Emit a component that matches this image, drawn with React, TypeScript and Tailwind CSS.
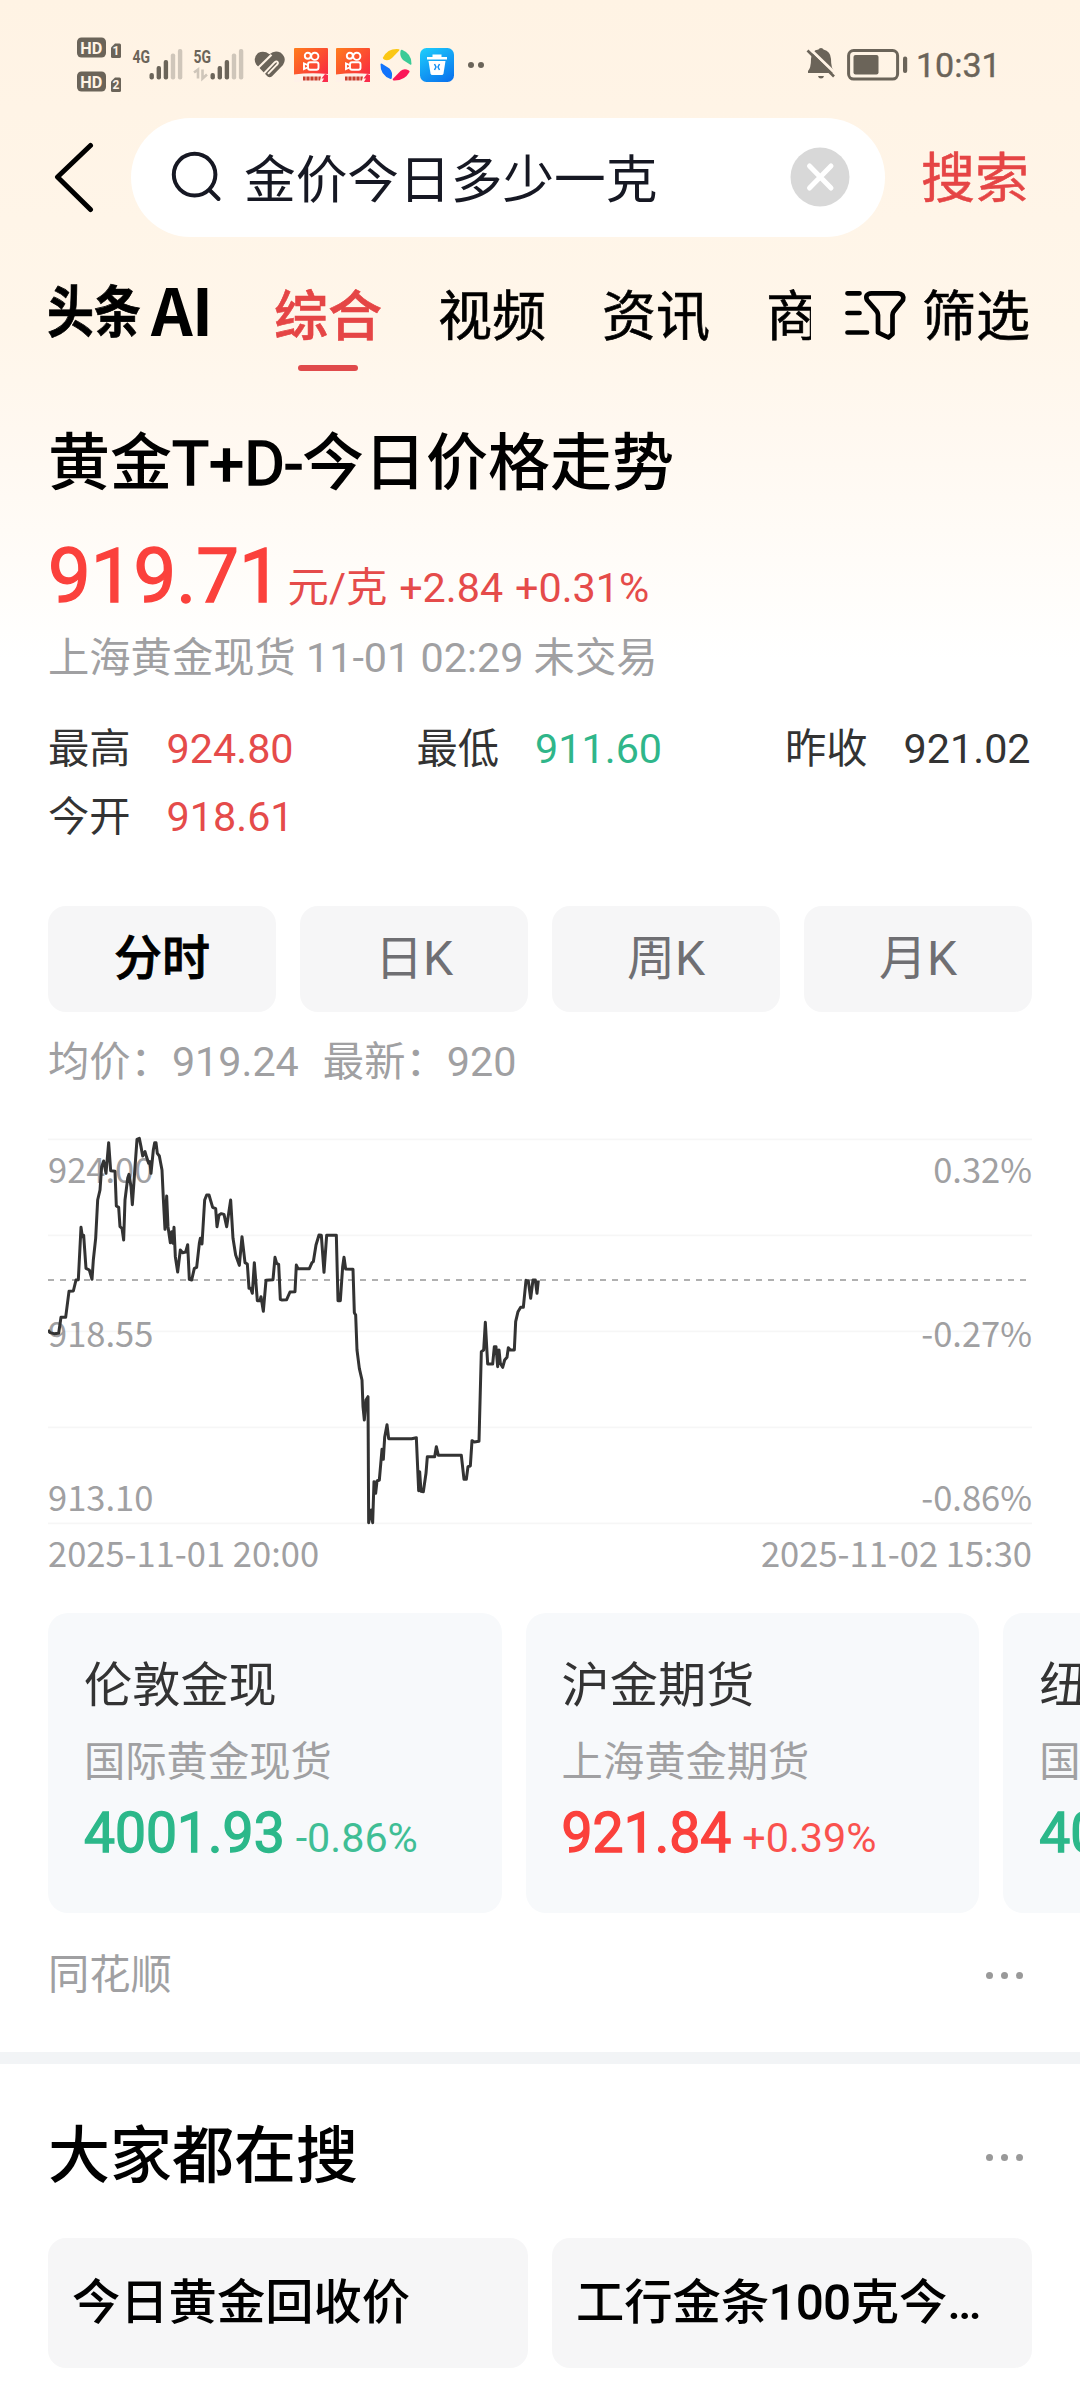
import React from "react";

const INK = "#6b6459";

function HdBadge({ n }: { n: string }) {
  return (
    <svg className="overflow-visible" width="46" height="22" viewBox="0 0 46 22" fontFamily="Roboto, sans-serif">
      <rect x="1" y="0.5" width="29" height="20" rx="4.5" fill={INK} />
      <text x="4.2" y="16.5" fontSize="17" fontWeight="700" fill="#fff3e5" textLength="22" lengthAdjust="spacingAndGlyphs">HD</text>
      <path d="M35 10.500 39 6.500H43.500Q45 6.500 45 8V19.500Q45 21 43.500 21H36.500Q35 21 35 19.500Z" fill={INK} />
      <text x="40" y="18" fontSize="12" fontWeight="700" fill="#fff3e5" textAnchor="middle">{n}</text>
    </svg>
  );
}

function Signal({ label, data }: { label: string; data?: boolean }) {
  const tops = [26, 19, 13, 6.500, 2];
  return (
    <svg className="overflow-visible" width="52" height="36" viewBox="0 0 52 36" fontFamily="Roboto, sans-serif">
      <text x="0.500" y="15.500" fontSize="19" fontWeight="700" fill={INK} textLength="17.500" lengthAdjust="spacingAndGlyphs">{label}</text>
      {tops.map((t, i) => (
        <rect key={i} x={17.500 + i * 7.100} y={t} width="4.400" height={32.500 - t} rx="2" fill={i < 3 ? INK : "#cfc6ba"} />
      ))}
      {data && (
        <path d="M1 25.500 5 22.500V31.500M9.500 22.500V31.500L14 27.500" fill="none" stroke="#cfc6ba" strokeWidth="2.600" />
      )}
    </svg>
  );
}

function HealthIcon() {
  return (
    <svg width="32" height="28" viewBox="0 0 32 28" fill="none">
      <path d="M15.500 3.200Q20.500 -1.200 26.500 1.500Q33.500 7 29 14L17.800 25.400Q15.500 27 13.300 25.200L2.200 13.500Q-1.500 7 4 2Q10 -1 15.500 3.200Z" fill={INK} />
      <path d="M3.500 17.500 17.500 3.800" stroke="#fff3e5" strokeWidth="2.200" />
      <path d="M9.500 23 20.800 11.200Q22.600 9.600 23.600 11T22.500 14.200L14 22.800" stroke="#fff3e5" strokeWidth="1.900" />
    </svg>
  );
}

function VideoApp({ id }: { id: string }) {
  return (
    <svg width="35" height="35" viewBox="0 0 35 35">
      <defs>
        <linearGradient id={id} x1="0" y1="0" x2="1" y2="1">
          <stop offset="0" stopColor="#ff7d1c" />
          <stop offset="0.600" stopColor="#fb4534" />
          <stop offset="1" stopColor="#fa1f4a" />
        </linearGradient>
      </defs>
      <rect width="34" height="34" rx="1" fill={`url(#${id})`} />
      <g fill="none" stroke="#fff" strokeWidth="1.900">
        <circle cx="13.800" cy="7.800" r="3" />
        <circle cx="20.800" cy="8.300" r="3.600" />
        <rect x="14" y="14.200" width="10.500" height="7.600" rx="2" />
        <path d="M13.500 17 10 15.500V21L13.500 19.500" />
      </g>
      <path d="M0 26.500Q16 24.500 34 26V34H0Z" fill="#fff1e8" />
      <path d="M9 28.500H27L26 32.500H9Z" fill="#c9402f" />
      <path d="M12 28V33M16 28V33M20 28V33M24 28V33" stroke="#fff1e8" strokeWidth="0.800" />
      <path d="M31 26 27.500 30.500H30L28 34H34V27Z" fill="#fa2c4b" />
    </svg>
  );
}

function PinwheelApp() {
  return (
    <svg width="34" height="34" viewBox="0 0 34 34">
      <path d="M4 9.500Q9 0 20 1.200Q21 1.500 20 2.800L13 10Q9 13.500 5 11.500Q3.500 10.700 4 9.500Z" fill="#fbc714" />
      <path d="M23 1.800Q33 6 32.500 16Q32.200 17.200 31 16.500L24 12Q20.500 8.500 21.500 3Q22 1.500 23 1.800Z" fill="#3bcb97" />
      <path d="M30.500 24Q25.500 33 14.500 32.500Q13 32 14 30.800L21.500 23Q25 20 29.500 22.200Q31 23 30.500 24Z" fill="#fb1757" />
      <path d="M11.500 31Q1 27 1.500 16Q2 15 3 15.700L10.500 20.500Q14 24 12.800 30Q12.500 31.300 11.500 31Z" fill="#1273fb" />
    </svg>
  );
}

function CleanerApp() {
  return (
    <svg width="34" height="34" viewBox="0 0 34 34">
      <defs>
        <linearGradient id="cleaner" x1="0.200" y1="0" x2="0.800" y2="1">
          <stop offset="0" stopColor="#1cc8fb" />
          <stop offset="1" stopColor="#0a74ee" />
        </linearGradient>
      </defs>
      <rect width="34" height="34" rx="6.500" fill="url(#cleaner)" />
      <path d="M12.500 6.500H21.500V9H27V11.500H7V9H12.500Z" fill="#fff" />
      <path d="M8.500 13H25.500L23.500 25.500Q23.200 27 21.500 27H12.500Q10.800 27 10.500 25.500Z" fill="#fff" />
      <path d="M14.500 16 16 19 14.500 22M19.500 16 18 19 19.500 22" stroke="#1490f4" strokeWidth="1.500" fill="none" />
    </svg>
  );
}

function StatusBar() {
  return (
    <div className="flex h-[117px] items-start">
      <div className="mt-[37px] ml-[76px] flex flex-col gap-[12px]">
        <HdBadge n="1" />
        <HdBadge n="2" />
      </div>
      <div className="mt-[47px] ml-[10px] flex">
        <Signal label="4G" />
        <div className="ml-[9px]"><Signal label="5G" data /></div>
        <div className="mt-[4px] ml-[9px]"><HealthIcon /></div>
        <div className="mt-[1px] ml-[8px]"><VideoApp id="video-a" /></div>
        <div className="mt-[1px] ml-[7px]"><VideoApp id="video-b" /></div>
        <div className="mt-[1px] ml-[8px]"><PinwheelApp /></div>
        <div className="mt-[1px] ml-[7px]"><CleanerApp /></div>
        <div className="mt-[15px] ml-[14px] flex gap-[4px]">
          <span className="size-[6px] rounded-full bg-[#6b6459]" />
          <span className="size-[6px] rounded-full bg-[#6b6459]" />
        </div>
      </div>
      <svg className="mt-[47px] ml-auto" width="30" height="33" viewBox="0 0 30 33">
        <path d="M5 12Q5.500 3 12.500 2.500Q13 1 15 1T17.500 2.500Q24.500 4 25 12Q25 21 28 24V26H2V24Q5 21 5 12Z" fill={INK} />
        <path d="M12 29H18Q17.500 31.500 15 31.500T12 29Z" fill={INK} />
        <path d="M3.500 1.500 30.500 27.500" stroke="#fff3e5" strokeWidth="3" />
        <path d="M1.500 3.500 28 29.500" stroke={INK} strokeWidth="2.600" />
      </svg>
      <svg className="mt-[48px] ml-[11px]" width="62" height="34" viewBox="0 0 62 34">
        <rect x="1.600" y="2.600" width="49" height="28.500" rx="5" fill="none" stroke={INK} strokeWidth="3" />
        <rect x="6.500" y="7" width="25" height="19.500" rx="2" fill={INK} />
        <rect x="56" y="8.500" width="4.200" height="16.500" rx="2" fill={INK} />
      </svg>
      <span className="mt-[44px] mr-[78px] ml-[7px] w-[86px] text-[34px] leading-[42px] whitespace-nowrap text-[#6b6459] [-webkit-text-stroke:0.4px]">10:31</span>
    </div>
  );
}

function SearchBar() {
  return (
    <div className="flex h-[120px] items-center">
      <svg className="ml-[53px]" width="42" height="72" viewBox="0 0 42 72">
        <path d="M37.500 4.500 4.500 36 37.500 68.500" fill="none" stroke="#000" strokeWidth="5" strokeLinecap="round" strokeLinejoin="round" />
      </svg>
      <div className="ml-[36px] flex h-[119px] w-[754px] items-center rounded-full bg-white">
        <svg className="ml-[40px]" width="52" height="52" viewBox="0 0 52 52">
          <circle cx="23.600" cy="23.600" r="20.800" fill="none" stroke="#161823" strokeWidth="4" />
          <path d="M39 39.500 47.500 48" stroke="#161823" strokeWidth="4" strokeLinecap="round" />
        </svg>
        <span className="ml-[21px] pt-[8px] text-[51.700px] leading-[60px] text-[#161823]">金价今日多少一克</span>
        <svg className="mr-[35px] ml-auto" width="60" height="60" viewBox="0 0 60 60">
          <circle cx="30" cy="30" r="29.500" fill="#d8d8d8" />
          <path d="M19.500 19 41 41M41 19 19.500 41" stroke="#fff" strokeWidth="5" strokeLinecap="round" />
        </svg>
      </div>
      <span className="ml-[36px] pt-[6px] text-[54px] leading-[60px] text-[#e54545] [-webkit-text-stroke:0.5px]">搜索</span>
    </div>
  );
}

function Tabs() {
  return (
    <div className="flex h-[149px] items-start">
      <div className="mt-[41px] ml-[47px] flex w-[227px] items-end font-['Noto_Sans_CJK_SC',sans-serif] font-bold whitespace-nowrap text-black">
        <span className="origin-center scale-y-[1.18] text-[47px] leading-[60px] [-webkit-text-stroke:0.6px]">头条</span>
        <span className="ml-[10px] text-[65px] leading-[60px] tracking-[-1px]">AI</span>
      </div>
      <div className="mt-[46px] flex w-[537px] gap-[56px] overflow-hidden text-[54px] leading-[70px] whitespace-nowrap text-black [-webkit-text-stroke:0.6px]">
        <div className="flex shrink-0 flex-col items-center font-medium text-[#e54545]">
          <span className="h-[82px]">综合</span>
          <span className="h-[6px] w-[60px] rounded-full bg-[#e04a4b]" />
        </div>
        <span className="shrink-0">视频</span>
        <span className="shrink-0">资讯</span>
        <span className="shrink-0">商品</span>
      </div>
      <svg className="mt-[52px] ml-[33px]" width="64" height="54" viewBox="0 0 64 54" fill="none" stroke="#000" strokeWidth="4.700" strokeLinecap="round" strokeLinejoin="round">
        <path d="M3.500 4.300H15.500M3.500 24H15.500M3.500 43.500H23" />
        <path d="M27.500 4.300H54Q60.500 4.800 59 11L50 22Q48.500 24 48.500 26V45L44.500 48.500 34 43.500V26Q34 24 32.500 22L23 11Q20.500 5 27.500 4.300Z" />
      </svg>
      <span className="mt-[46px] ml-[14px] text-[54px] leading-[70px] whitespace-nowrap text-black [-webkit-text-stroke:0.6px]">筛选</span>
    </div>
  );
}

const CHART_POINTS =
  "54,630 60,638 72,641 86,640 93,592 107,592 117,514 130,513 138,480 145,479 153,322 157,350 161,346 168,445 178,450 186,478 190,420 197,355 203,240 210,210 215,140 221,123 228,160 236,68 242,152 255,154 259,258 266,262 270,320 276,325 281,360 285,240 293,175 297,163 303,200 307,254 313,170 321,58 328,55 333,80 338,108 345,95 350,112 356,130 360,125 363,160 370,90 374,68 378,68 382,100 388,108 396,150 400,235 405,328 410,228 414,320 421,368 425,335 429,370 432,322 436,410 443,456 451,390 458,398 467,396 473,374 478,478 485,480 493,445 500,442 508,370 511,355 516,372 524,240 530,225 537,225 548,262 557,266 561,320 567,285 574,281 582,283 590,320 602,240 609,355 617,405 628,436 636,350 645,428 652,432 657,505 662,505 667,520 673,428 682,542 690,542 693,530 700,574 708,481 729,479 735,412 740,430 746,433 751,538 755,540 770,539 780,516 795,515 799,435 804,446 838,446 846,428 850,425 858,375 867,345 874,346 882,457 890,346 919,346 924,542 931,542 938,440 942,412 947,447 969,448 973,578 977,585 981,690 988,745 996,780 999,860 1003,900 1008,840 1014,830 1016,1208 1024,1170 1028,1208 1032,1085 1037,1120 1041,1083 1048,1080 1056,988 1060,1018 1064,952 1071,914 1076,956 1145,956 1159,953 1166,1112 1169,1055 1173,1114 1180,1115 1188,1060 1192,1010 1214,1010 1219,980 1225,1006 1294,1006 1302,1078 1309,1078 1314,1040 1321,1038 1326,962 1333,966 1347,964 1354,695 1361,690 1366,607 1373,732 1388,732 1393,680 1398,680 1403,740 1407,690 1411,730 1418,742 1424,720 1431,712 1435,683 1441,690 1453,690 1457,605 1464,575 1472,562 1480,562 1488,481 1495,483 1502,535 1509,480 1516,480 1521,520 1525,481";

const LEVELS = [
  ["924.00", "0.32%"],
  ["918.55", "-0.27%"],
  ["913.10", "-0.86%"],
];

function Chart() {
  return (
    <div className="font-['Noto_Sans_CJK_SC',sans-serif] text-[34.500px] text-[#a0a0a2]">
      <div className="relative h-[396px] pt-[19px]">
        <div className="flex flex-col gap-[124px] leading-[40px]">
          {LEVELS.map(([price, pct]) => (
            <div key={price} className="flex h-[39.800px] justify-between">
              <span>{price}</span>
              <span>{pct}</span>
            </div>
          ))}
        </div>
        <svg className="absolute top-0 left-0" width="984" height="396" viewBox="54 27 2952 1188">
          <g stroke="#000" strokeOpacity="0.035" strokeWidth="5">
            <path d="M54 58H3006M54 346H3006M54 634H3006M54 922H3006M54 1210H3006" />
          </g>
          <path d="M54 480H3006" stroke="#b0b0b0" strokeWidth="5.500" strokeDasharray="18 18" />
          <polyline points={CHART_POINTS} fill="none" stroke="#333" strokeWidth="9" strokeLinejoin="round" />
        </svg>
      </div>
      <div className="mt-[7px] flex justify-between leading-[40px]">
        <span>2025-11-01 20:00</span>
        <span>2025-11-02 15:30</span>
      </div>
    </div>
  );
}

const STATS = [
  ["最高", "924.80", "text-[#e54b4a]"],
  ["最低", "911.60", "text-[#2fb68a]"],
  ["昨收", "921.02", "text-[#333333]"],
  ["今开", "918.61", "text-[#e54b4a]"],
];

const CARDS = [
  ["伦敦金现", "国际黄金现货", "4001.93", "-0.86%", "text-[#2cb88a]"],
  ["沪金期货", "上海黄金期货", "921.84", "+0.39%", "text-[#fb413c]"],
  ["纽约金主连", "国际黄金期货", "4013.40", "-0.06%", "text-[#2cb88a]"],
];

function More() {
  return (
    <div className="mr-[9px] flex gap-[8.200px]">
      {[0, 1, 2].map((i) => (
        <span key={i} className="size-[7px] rounded-full bg-[#999999]" />
      ))}
    </div>
  );
}

export default function App() {
  return (
    <div className="h-[2388px] w-[1080px] overflow-hidden bg-white bg-[linear-gradient(180deg,#fff3e4_0px,#fff6ea_330px,#fff8f0_430px,#fffbf6_530px,#ffffff_660px)] font-[Roboto,'Noto_Sans_CJK_SC',sans-serif]">
      <StatusBar />
      <SearchBar />
      <Tabs />

      <main className="px-[48px]">
        <h1 className="mt-[41px] text-[62px] leading-[74px] font-medium whitespace-nowrap text-black">
          黄金<span className="font-normal [-webkit-text-stroke:1.6px]">T+D-</span>今日价格走势
        </h1>
        <div className="mt-[31px] flex h-[88px] items-baseline whitespace-nowrap text-[#e54b4a]">
          <span className="text-[76px] leading-[88px] text-[#fb413c] [-webkit-text-stroke:1.4px]">919.71</span>
          <span className="ml-[6px] text-[41.300px] [word-spacing:1.7px]">元/克 +2.84 +0.31%</span>
        </div>
        <p className="mt-[11px] text-[41.300px] leading-[54px] text-[#a0a0a2]">上海黄金现货 11-01 02:29 未交易</p>

        <div className="mt-[30px] grid grid-cols-[368.500px_368.500px_246px] text-[41.300px] leading-[68px] text-[#333333]">
          {STATS.map(([label, value, tone]) => (
            <div key={label} className="flex gap-[36px]">
              <span>{label}</span>
              <span className={tone}>{value}</span>
            </div>
          ))}
        </div>

        <div className="mt-[55px] grid grid-cols-4 gap-[24px] text-[48px] leading-[106px] text-[#6f6f73]">
          {["分时", "日K", "周K", "月K"].map((t, i) => (
            <div key={t} className={i === 0 ? "rounded-[18px] bg-[#f6f6f7] text-center font-medium text-black [-webkit-text-stroke:0.8px]" : "rounded-[18px] bg-[#f6f6f7] text-center"}>{t}</div>
          ))}
        </div>

        <div className="mt-[23px] mb-[40px] flex gap-[24px] text-[41.300px] leading-[54px] text-[#a0a0a2]">
          <span>均价：919.24</span>
          <span>最新：920</span>
        </div>

        <Chart />
      </main>

      <div className="mt-[41px] flex gap-[24px] pl-[48px]">
        {CARDS.map(([name, sub, price, pct, tone]) => (
          <div key={name} className="h-[300px] w-[453.600px] shrink-0 rounded-[20px] bg-[#f7f9fb] pt-[43px] pl-[36px] whitespace-nowrap">
            <p className="text-[48.200px] leading-[60px] text-[#333333]">{name}</p>
            <p className="mt-[19px] text-[41.300px] leading-[54px] text-[#a0a0a2]">{sub}</p>
            <div className={`mt-[12px] flex items-baseline ${tone}`}>
              <span className="text-[55.200px] leading-[64px] [-webkit-text-stroke:1.4px]">{price}</span>
              <span className="ml-[11px] text-[41.300px] opacity-90">{pct}</span>
            </div>
          </div>
        ))}
      </div>

      <div className="mt-[33px] flex items-center justify-between px-[48px]">
        <span className="text-[41.300px] leading-[58px] text-[#a0a0a2]">同花顺</span>
        <More />
      </div>
      <div className="mt-[48px] h-[12px] bg-[#f2f4f6]" />

      <section className="px-[48px]">
        <div className="mt-[55px] flex items-center justify-between">
          <h2 className="text-[62px] leading-[76px] font-medium text-black">大家都在搜</h2>
          <More />
        </div>
        <div className="mt-[43px] grid grid-cols-2 gap-[24px] text-[48.300px] leading-[130px] font-medium text-black">
          <div className="truncate rounded-[18px] bg-[#f6f6f7] px-[24px]">今日黄金回收价</div>
          <div className="truncate rounded-[18px] bg-[#f6f6f7] px-[24px]">
            工行金条<span className="font-normal [-webkit-text-stroke:1.4px]">100</span>克今日价格
          </div>
        </div>
      </section>
    </div>
  );
}
